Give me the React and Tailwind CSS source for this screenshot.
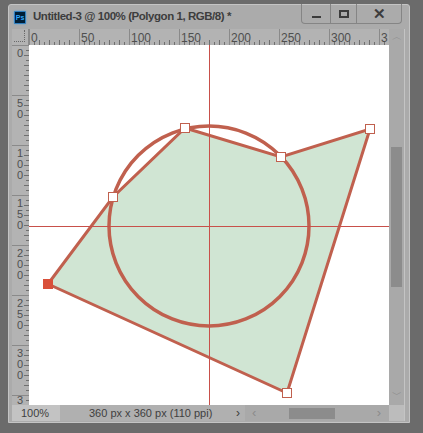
import React from "react";

const RED = "#c0604e";
const font = { fontFamily: '"Liberation Sans", Arial, sans-serif' };

// polygon anchors in canvas coordinates
const points = [
  [19, 239],
  [84, 152],
  [156, 83],
  [252, 112],
  [341, 84],
  [258, 348],
];

function PsIcon() {
  return (
    <div className="flex h-[13px] w-[12px] items-center justify-center rounded-[1px] border border-[#2f7fc0] bg-[#001e36] shadow-[0_0_2px_#4aa3e8]">
      <span className="text-[7px] font-bold leading-none text-[#31a8ff]" style={font}>
        Ps
      </span>
    </div>
  );
}

function TopRuler() {
  const ticks = [];
  for (let x = 0; x <= 360; x += 5) {
    if (x % 50 === 0) ticks.push(<line key={x} x1={x + 0.5} y1={0} x2={x + 0.5} y2={16} stroke="#8a8a8a" />);
    else ticks.push(<line key={x} x1={x + 0.5} y1={x % 10 === 0 ? 11 : 13} x2={x + 0.5} y2={16} stroke="#6f6f6f" />);
  }
  return (
    <svg width="360" height="16" className="block">
      {ticks}
      {[0, 50, 100, 150, 200, 250, 300, 350].map((v) => (
        <text key={v} x={v + 2} y={13} fontSize="12" fill="#4f4f4f" style={font}>
          {v === 350 ? "3" : v}
        </text>
      ))}
    </svg>
  );
}

function LeftRuler() {
  const ticks = [];
  for (let y = 0; y <= 360; y += 5) {
    if (y % 50 === 0) ticks.push(<line key={y} x1={0} y1={y + 0.5} x2={17} y2={y + 0.5} stroke="#8a8a8a" />);
    else ticks.push(<line key={y} x1={y % 10 === 0 ? 12 : 14} y1={y + 0.5} x2={17} y2={y + 0.5} stroke="#6f6f6f" />);
  }
  const labels = [0, 50, 100, 150, 200, 250, 300, 350];
  return (
    <svg width="17" height="360" className="block">
      {ticks}
      {labels.map((v) => {
        const digits = v === 350 ? ["3"] : String(v).split("");
        return digits.map((d, i) => (
          <text
            key={v + "-" + i}
            x={5}
            y={v === 350 ? 359 : v + 12 + i * 11}
            fontSize="11"
            fill="#4f4f4f"
            style={font}
          >
            {d}
          </text>
        ));
      })}
    </svg>
  );
}

function Canvas() {
  const poly = points.map((p) => p.join(",")).join(" ");
  return (
    <svg width="360" height="360" className="block bg-white">
      <polygon points={poly} fill="#d0e5d3" stroke={RED} strokeWidth="3" strokeLinejoin="miter" />
      <circle cx="180" cy="181" r="100" fill="none" stroke={RED} strokeWidth="3.5" />
      <rect x="180" y="0" width="1" height="360" fill="#c8504a" shapeRendering="crispEdges" />
      <rect x="0" y="181" width="360" height="1" fill="#c8504a" shapeRendering="crispEdges" />
      {points.map(([x, y], i) => (
        <rect
          key={i}
          x={x - 4.5}
          y={y - 4.5}
          width="9"
          height="9"
          fill={i === 0 ? "#d9503a" : "#ffffff"}
          stroke={i === 0 ? "#d9503a" : RED}
          strokeWidth="1"
        />
      ))}
    </svg>
  );
}

export default function App() {
  return (
    <div className="h-[433px] w-[423px] overflow-hidden bg-[#6b6b6b] pl-[8px] pt-[4px]" style={font}>
      <div className="flex h-[419px] w-[402px] flex-col rounded-t-[3px] border border-[#c4c4c4] bg-[#ababab]">
        {/* Title bar */}
        <div className="relative flex h-[24px] items-center gap-[7px] pl-[5px]">
          <PsIcon />
          <span className="text-[11.5px] font-bold tracking-[-0.45px] text-[#3d3d3d]">
            Untitled-3 @ 100% (Polygon 1, RGB/8) *
          </span>
          <div className="absolute right-[7px] top-[-1px] flex h-[20px] w-[101px] rounded-b-[4px] border border-t-0 border-[#858585]">
            <div className="flex w-[28px] items-end justify-center pb-[5px]">
              <div className="h-[2px] w-[9px] bg-[#3c3c3c]" />
            </div>
            <div className="flex w-[27px] items-center justify-center border-x border-[#858585]">
              <div className="h-[8px] w-[10px] border-2 border-[#3c3c3c]" />
            </div>
            <div className="flex flex-1 items-center justify-center text-[15px] font-bold leading-none text-[#3c3c3c]">
              ✕
            </div>
          </div>
        </div>

        {/* Body */}
        <div className="flex pl-[3px]">
          <div className="flex flex-col">
            {/* Top ruler row */}
            <div className="flex h-[16px] bg-[#b3b3b3]">
              <div className="relative h-[16px] w-[17px] border-r border-[#8a8a8a]">
                <div className="absolute left-[12px] top-[1px] h-[12px] border-l border-dotted border-[#6a6a6a]" />
                <div className="absolute left-[2px] top-[12px] w-[11px] border-t border-dotted border-[#6a6a6a]" />
              </div>
              <TopRuler />
            </div>
            {/* Left ruler + canvas */}
            <div className="flex">
              <div className="bg-[#b3b3b3]">
                <LeftRuler />
              </div>
              <Canvas />
            </div>
            {/* Status bar */}
            <div className="flex h-[16px] items-center bg-[#b0b0b0] text-[11px] text-[#3f3f3f]">
              <div className="flex h-full w-[48px] items-center justify-center bg-[#c3c3c3] pr-[2px]">100%</div>
              <div className="w-[176px] pl-[29px]">360 px x 360 px (110 ppi)</div>
              <div className="w-[9px] text-[12px] text-[#3a3a3a]">›</div>
              <div className="relative flex h-full flex-1 items-center bg-[#a9a9a9] text-[13px] text-[#8b8b8b]">
                <span className="ml-[7px]">‹</span>
                <div className="ml-[33px] h-[11px] w-[46px] bg-[#8c8c8c]" />
                <span className="ml-auto mr-[8px]">›</span>
              </div>
            </div>
          </div>

          {/* Vertical scrollbar */}
          <div className="flex w-[15px] flex-col bg-[#a9a9a9]">
            <div className="flex h-[16px] items-center justify-center text-[10px] leading-none text-[#8b8b8b]">︿</div>
            <div className="h-[102px]" />
            <div className="mx-[2px] h-[140px] bg-[#8c8c8c]" />
            <div className="flex-1" />
            <div className="flex h-[20px] items-center justify-center text-[10px] leading-none text-[#8b8b8b]">﹀</div>
            <div className="h-[16px] bg-[#bcbcbc]" />
          </div>
          <div className="w-[1px] bg-[#c4c4c4]" />
        </div>
      </div>
    </div>
  );
}
